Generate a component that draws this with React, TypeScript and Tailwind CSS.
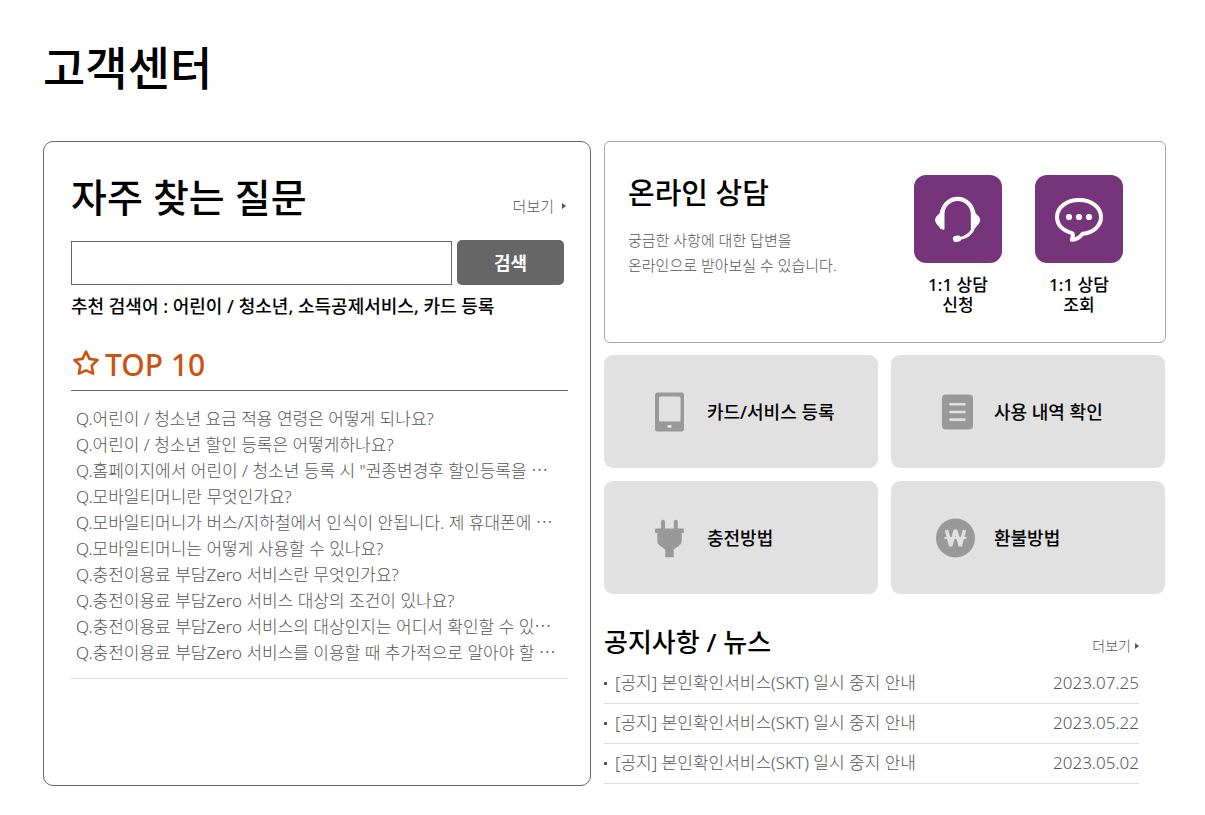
import type { ReactNode } from "react";

const QUESTIONS = [
  "Q.어린이 / 청소년 요금 적용 연령은 어떻게 되나요?",
  "Q.어린이 / 청소년 할인 등록은 어떻게하나요?",
  "Q.홈페이지에서 어린이 / 청소년 등록 시 \"권종변경후 할인등록을 ⋯",
  "Q.모바일티머니란 무엇인가요?",
  "Q.모바일티머니가 버스/지하철에서 인식이 안됩니다. 제 휴대폰에 ⋯",
  "Q.모바일티머니는 어떻게 사용할 수 있나요?",
  "Q.충전이용료 부담Zero 서비스란 무엇인가요?",
  "Q.충전이용료 부담Zero 서비스 대상의 조건이 있나요?",
  "Q.충전이용료 부담Zero 서비스의 대상인지는 어디서 확인할 수 있⋯",
  "Q.충전이용료 부담Zero 서비스를 이용할 때 추가적으로 알아야 할 ⋯",
];

const NOTICES = [
  { title: "[공지] 본인확인서비스(SKT) 일시 중지 안내", date: "2023.07.25" },
  { title: "[공지] 본인확인서비스(SKT) 일시 중지 안내", date: "2023.05.22" },
  { title: "[공지] 본인확인서비스(SKT) 일시 중지 안내", date: "2023.05.02" },
];

function StarIcon() {
  return (
    <svg className="mb-1 h-7 w-7" viewBox="0 0 28 28" fill="none" stroke="#cb5311" strokeWidth="2.6" strokeLinejoin="round">
      <path d="M14 2.6l3.5 7.3 8 1.1-5.800 5.600 1.400 8-7.100-3.200-7.100 3.200 1.400-8L2.500 11l8-1.100z" />
    </svg>
  );
}

function HeadsetIcon() {
  return (
    <svg className="h-12 w-12" viewBox="0 0 48 48" fill="#fff">
      <path d="M8.200 34V19.500a15.400 15.600 0 0 1 30.800 0V33" fill="none" stroke="#fff" strokeWidth="4.200" />
      <path d="M10.300 15v19.800c-2.300.2-4-1.300-5.300-3-2.300-2.600-4-4.600-4-6.800s1.700-4 4.600-6.800c.4-1.200.6-2.200.8-3.200z" />
      <path d="M36.900 15v19.800c2.300.2 4-1.300 5.300-3 2.300-2.600 4-4.600 4-6.800s-1.700-4-4.600-6.800c-.4-1.200-.6-2.200-.8-3.200z" />
      <path d="M40 31.500c-2 6.500-6.500 10.500-14 12" fill="none" stroke="#fff" strokeWidth="3" />
      <rect x="19" y="40.800" width="8" height="6" rx="2.500" transform="rotate(-8 23 44)" />
    </svg>
  );
}

function ChatIcon() {
  return (
    <svg className="h-12 w-12" viewBox="0 0 48 48" fill="#fff">
      <path
        d="M24 5c12.400 0 22 7.400 22 17 0 9-8 16-18.500 16.800-2.500 3.500-6 5.600-10.700 6 1.200-2.300 1.500-4.400.7-6.500C8 35.500 2 30 2 22 2 12.400 11.600 5 24 5z"
        fill="none"
        stroke="#fff"
        strokeWidth="4"
        strokeLinejoin="round"
      />
      <circle cx="14" cy="22" r="3.100" />
      <circle cx="24" cy="22" r="3.100" />
      <circle cx="34" cy="22" r="3.100" />
    </svg>
  );
}

function TabletIcon() {
  return (
    <svg className="h-10 w-10" viewBox="0 0 40 40">
      <rect x="6" y=".5" width="29" height="39" rx="2.500" fill="#999" />
      <rect x="10" y="4.500" width="21.500" height="25" rx="1.500" fill="#e1e1e1" />
      <rect x="18.500" y="33" width="4" height="2.800" rx="1" fill="#f0f0f0" />
    </svg>
  );
}

function ListIcon() {
  return (
    <svg className="h-10 w-10" viewBox="0 0 40 40">
      <rect x="6" y="2.500" width="31" height="35" rx="4" fill="#999" />
      <path d="M14.500 12.300h14M14.500 20h14M14.500 27.600h14" stroke="#e1e1e1" strokeWidth="2.600" strokeLinecap="round" />
    </svg>
  );
}

function PlugIcon() {
  return (
    <svg className="h-10 w-10" viewBox="0 0 40 40" fill="#999">
      <path d="M12 11V3.700a2 2 0 0 1 4 0V11zM24.800 11V3.700a2 2 0 0 1 4 0V11z" />
      <rect x="6" y="10.500" width="29" height="4.500" rx="1" />
      <path d="M8.300 14h24.400v9.500c0 2-1.700 3.700-4 5.300-2.500 1.700-4 2.200-4 4v6.500h-8.400v-6.500c0-1.800-1.500-2.300-4-4-2.300-1.600-4-3.300-4-5.300z" />
    </svg>
  );
}

function WonIcon() {
  return (
    <svg className="h-10 w-10" viewBox="0 0 40 40">
      <circle cx="19.500" cy="20" r="19.500" fill="#999" />
      <path
        d="M10.500 12l4.200 16L19 13h1l4.300 15 4.200-16"
        fill="none"
        stroke="#e1e1e1"
        strokeWidth="3.400"
        strokeLinejoin="bevel"
      />
      <path d="M8.500 20h22" stroke="#e1e1e1" strokeWidth="2" />
    </svg>
  );
}

const MENUS = [
  { label: "카드/서비스 등록", icon: <TabletIcon /> },
  { label: "사용 내역 확인", icon: <ListIcon /> },
  { label: "충전방법", icon: <PlugIcon /> },
  { label: "환불방법", icon: <WonIcon /> },
];

function Arrow() {
  return (
    <svg className="h-1.5 w-1" viewBox="0 0 4 6" fill="#555">
      <path d="M0 0l4 3-4 3z" />
    </svg>
  );
}

function ConsultLink({ action, children }: { action: string; children: ReactNode }) {
  return (
    <a href="#" className="w-[88px] text-center text-[17px] leading-5 font-medium">
      <span className="mb-3 flex h-[88px] items-center justify-center rounded-xl bg-[#76347a]">
        {children}
      </span>
      1:1 상담
      <br />
      {action}
    </a>
  );
}

export default function App() {
  return (
    <main
      lang="ko"
      className="min-h-screen bg-white pt-[34px] pr-[39px] pb-7 pl-[43px] font-['Noto_Sans','Noto_Sans_CJK_KR',sans-serif] text-black"
    >
      <h1 className="text-[46px] leading-[66px] font-medium">고객센터</h1>

      <div className="mt-[41px] grid grid-cols-[548fr_562fr] gap-[13px]">
        {/* FAQ */}
        <section className="rounded-[10px] border border-[#666] pt-7 pr-[22px] pl-[27px]">
          <div className="flex items-end justify-between pr-0.5">
            <h2 className="text-[39px] leading-[54px] font-medium">자주 찾는 질문</h2>
            <a href="#" className="mb-1.5 flex items-center gap-2 text-[15px] leading-6 font-light text-[#555]">
              더보기
              <Arrow />
            </a>
          </div>

          <form className="mt-4 flex items-end gap-[5px] pr-1" onSubmit={(e) => e.preventDefault()}>
            <input
              type="text"
              aria-label="검색어"
              className="h-11 min-w-0 flex-1 border border-[#666] px-3 text-lg outline-none"
            />
            <button type="submit" className="h-[45px] w-[107px] rounded-[5px] bg-[#666] text-lg font-bold text-white">
              검색
            </button>
          </form>
          <p className="mt-[7px] text-lg leading-7 font-medium whitespace-nowrap">
            추천 검색어 : 어린이 / 청소년, 소득공제서비스, 카드 등록
          </p>

          <h3 className="mt-5 flex h-[51px] items-center gap-[5px] border-b border-[#666] pl-px text-[30px] leading-10 font-medium text-[#cb5311]">
            <StarIcon />
            TOP 10
          </h3>
          <ul className="border-b border-[#ddd] pt-[15px] pb-3 pl-[5px] text-[17px] leading-[26px] font-light text-[#555]">
            {QUESTIONS.map((q) => (
              <li key={q} className="whitespace-nowrap">
                <a href="#">{q}</a>
              </li>
            ))}
          </ul>
        </section>

        <div className="pb-0.5">
          {/* Online consulting */}
          <section className="flex h-[202px] justify-between rounded-md border border-[#b89bbd] pt-[33px] pr-[42px] pl-[23px]">
            <div>
              <h2 className="text-[29px] leading-9 font-medium">온라인 상담</h2>
              <p className="mt-[17px] text-[15px] leading-[25px] font-light text-[#555]">
                궁금한 사항에 대한 답변을
                <br />
                온라인으로 받아보실 수 있습니다.
              </p>
            </div>
            <div className="flex gap-[33px]">
              <ConsultLink action="신청">
                <HeadsetIcon />
              </ConsultLink>
              <ConsultLink action="조회">
                <ChatIcon />
              </ConsultLink>
            </div>
          </section>

          <nav className="mt-3 mr-px grid grid-cols-2 gap-[13px]">
            {MENUS.map((menu) => (
              <a
                key={menu.label}
                href="#"
                className="flex h-[113px] items-center gap-[18px] rounded-[9px] bg-[#e1e1e1] pl-[45px] text-lg font-medium"
              >
                {menu.icon}
                {menu.label}
              </a>
            ))}
          </nav>

          {/* Notices */}
          <section className="mt-7 pr-[27px]">
            <div className="flex items-center justify-between">
              <h2 className="text-[26px] leading-10 font-medium">공지사항 / 뉴스</h2>
              <a href="#" className="mt-2 flex items-center gap-1 text-sm font-light text-[#555]">
                더보기
                <Arrow />
              </a>
            </div>
            <ul className="mt-0.5 text-[17px] font-light text-[#555]">
              {NOTICES.map((notice) => (
                <li key={notice.date} className="flex h-10 items-center border-b border-[#ddd] pb-0.5">
                  <span className="mt-0.5 mr-2 h-[3px] w-[3px] bg-[#555]" />
                  <a href="#">{notice.title}</a>
                  <time className="ml-auto">{notice.date}</time>
                </li>
              ))}
            </ul>
          </section>
        </div>
      </div>
    </main>
  );
}
